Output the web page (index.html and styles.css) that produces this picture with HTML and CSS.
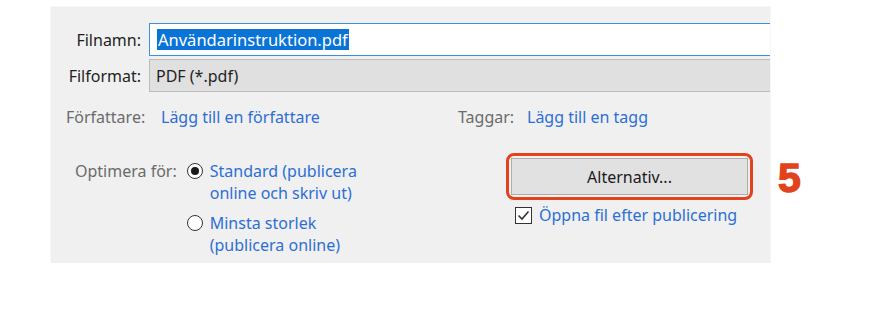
FILE: index.html
```html
<!DOCTYPE html>
<html lang="sv">
<head>
<meta charset="utf-8">
<title>Publicera som PDF</title>
<link rel="stylesheet" href="styles.css">
</head>
<body>
<div class="panel">
  <div class="fields">
    <label class="flabel">Filnamn:</label>
    <div class="input"><span class="sel">Användarinstruktion.pdf</span></div>
    <label class="flabel">Filformat:</label>
    <div class="select">PDF (*.pdf)</div>
  </div>
  <div class="meta">
    <span class="mlabel">Författare:</span>
    <span class="link">Lägg till en författare</span>
    <span class="mlabel">Taggar:</span>
    <span class="link">Lägg till en tagg</span>
  </div>
  <div class="options">
    <div class="optleft">
      <span class="mlabel olabel">Optimera för:</span>
      <div class="radios">
        <div class="radio-item">
          <span class="radio checked"><span class="dot"></span></span>
          <span class="link">Standard (publicera<br>online och skriv ut)</span>
        </div>
        <div class="radio-item">
          <span class="radio"></span>
          <span class="link">Minsta storlek<br>(publicera online)</span>
        </div>
      </div>
    </div>
    <div class="optright">
      <div class="highlight">
        <div class="button">Alternativ...</div>
      </div>
      <div class="check-row">
        <span class="checkbox">
          <svg width="15" height="15" viewBox="0 0 15 15"><polyline points="2.5,7.5 6,11 12.5,3.5" fill="none" stroke="#333" stroke-width="1.6"/></svg>
        </span>
        <span class="link">Öppna fil efter publicering</span>
      </div>
    </div>
  </div>
</div>
<div class="step">5</div>
</body>
</html>
```
FILE: styles.css
```css
html, body {
  margin: 0;
  background: #ffffff;
}
body {
  display: flex;
  align-items: flex-start;
  padding: 7px 0 0 51px;
  font-family: "Noto Sans", "Open Sans", sans-serif;
  font-size: 16px;
}
.panel {
  width: 719px;
  height: 256px;
  box-sizing: border-box;
  background: #f0f0f0;
  padding-top: 16px;
  box-shadow: 0 0 0 1px #f7f7f7;
}
.fields {
  display: grid;
  grid-template-columns: 90px 1fr;
  column-gap: 8px;
  row-gap: 3px;
}
.flabel {
  text-align: right;
  color: #1f1f1f;
  align-self: center;
  font-size: 16px;
}
.input {
  height: 33px;
  box-sizing: border-box;
  border: 1px solid #3c8fe0;
  border-right: none;
  background: #ffffff;
  display: flex;
  align-items: center;
  padding-left: 7px;
}
.sel {
  background: #0a74d6;
  color: #ffffff;
  line-height: 21px;
  font-size: 16.5px;
  padding: 0 1px;
}
.select {
  height: 33px;
  box-sizing: border-box;
  border: 1px solid #bcbcbc;
  border-right: none;
  background: #e0e0e0;
  color: #1f1f1f;
  display: flex;
  align-items: center;
  padding-left: 6px;
  font-size: 16px;
}
.meta {
  display: grid;
  grid-template-columns: 95px 297px 69px auto;
  margin-top: 14px;
  padding-left: 15px;
  line-height: 22px;
}
.mlabel {
  color: #6b6b6b;
}
.link {
  color: #2c6fd4;
}
.options {
  display: grid;
  grid-template-columns: 455px auto;
  margin-top: 32px;
  line-height: 22px;
}
.optleft {
  display: flex;
  align-items: flex-start;
  padding-left: 24px;
}
.olabel {
  margin-right: 10px;
}
.radios {
  display: flex;
  flex-direction: column;
  gap: 8px;
}
.radio-item {
  display: flex;
  align-items: flex-start;
  gap: 7px;
}
.radio {
  width: 16px;
  height: 16px;
  box-sizing: border-box;
  border: 1px solid #333333;
  border-radius: 50%;
  background: #ffffff;
  margin-top: 3px;
  display: flex;
  align-items: center;
  justify-content: center;
  flex: none;
}
.dot {
  width: 8px;
  height: 8px;
  border-radius: 50%;
  background: #1a1a1a;
}
.optright {
  margin-top: -7px;
}
.highlight {
  width: 247px;
  height: 47px;
  box-sizing: border-box;
  border: 3px solid #e2431c;
  border-radius: 8px;
  padding: 2px;
}
.button {
  height: 100%;
  box-sizing: border-box;
  background: #e1e1e1;
  border: 1px solid #adadad;
  display: flex;
  align-items: center;
  justify-content: center;
  color: #1a1a1a;
}
.check-row {
  display: flex;
  align-items: center;
  gap: 7px;
  margin-top: 4px;
  padding-left: 9px;
}
.checkbox {
  width: 17px;
  height: 17px;
  box-sizing: border-box;
  border: 1px solid #333333;
  background: #ffffff;
  display: flex;
  align-items: center;
  justify-content: center;
}
.step {
  margin-left: 8px;
  margin-top: 150px;
  font-family: "Liberation Sans", Arial, sans-serif;
  font-weight: 700;
  font-size: 41px;
  line-height: 42px;
  color: #e2431c;
  -webkit-text-stroke: 1.4px #e2431c;
}
```
